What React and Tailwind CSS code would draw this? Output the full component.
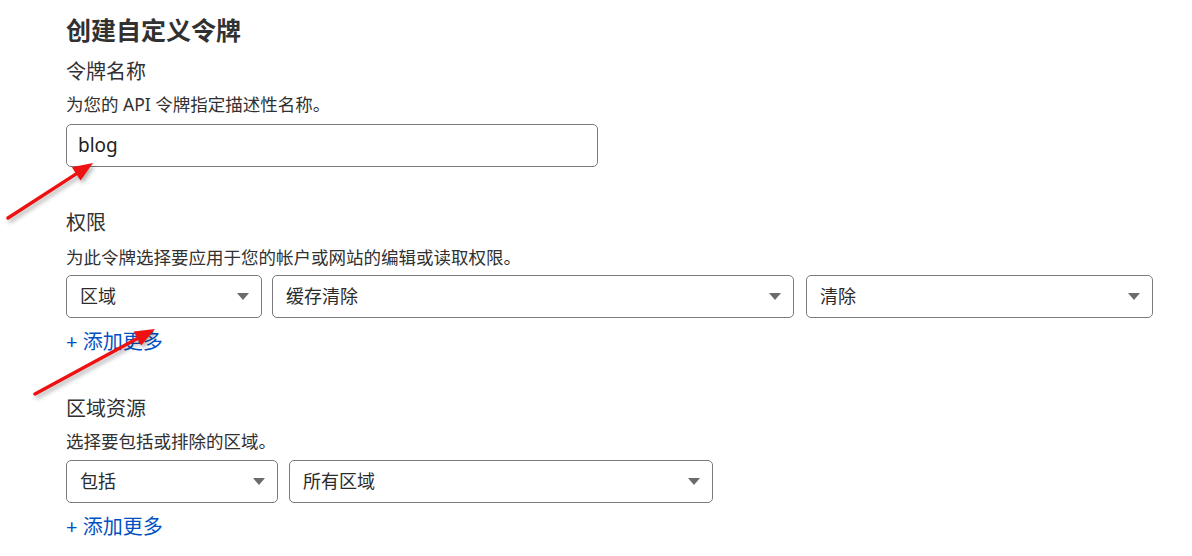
import React from 'react';

const font = { fontFamily: '"Noto Sans", "Noto Sans CJK SC", sans-serif' };

const Caret = () => (
    <svg width="12" height="7" viewBox="0 0 12 7" className="shrink-0">
        <path d="M0 0 L12 0 L6 7 Z" fill="#6b6b6b" />
    </svg>
);

const Select = ({ value, width }) => (
    <div
        className={`${width} h-[43px] flex items-center justify-between pl-[13px] pr-[12px] border border-[#7b7b7b] rounded-[5px] bg-white text-[18px] text-[#2b2b2b]`}
    >
        <span>{value}</span>
        <Caret />
    </div>
);

const AddMore = () => (
    <a className="mt-[12px] h-[24px] leading-[24px] text-[20px] text-[#0051c3] cursor-pointer">
        + 添加更多
    </a>
);

const Arrow = ({ x1, y1, x2, y2 }) => {
    const ang = Math.atan2(y2 - y1, x2 - x1);
    const len = 20;
    const w = 8;
    const bx = x2 - len * Math.cos(ang);
    const by = y2 - len * Math.sin(ang);
    const px = -Math.sin(ang) * w;
    const py = Math.cos(ang) * w;
    return (
        <g>
            <line x1={x1} y1={y1} x2={bx} y2={by} stroke="#ee1111" strokeWidth="3.4" strokeLinecap="round" />
            <polygon points={`${x2},${y2} ${bx + px},${by + py} ${bx - px},${by - py}`} fill="#ee1111" />
        </g>
    );
};

export default function App() {
    return (
        <div className="relative w-[1192px] h-[556px] bg-white overflow-hidden" style={font}>
            <div className="flex flex-col items-start pl-[66px] pt-[14px]">
                <h1 className="h-[32px] leading-[32px] text-[25px] font-bold text-[#313131]">创建自定义令牌</h1>

                <div className="mt-[12px] h-[28px] leading-[28px] text-[20px] text-[#313131]">令牌名称</div>
                <div className="mt-[6px] h-[24px] leading-[24px] text-[17.5px] text-[#313131]">为您的 API 令牌指定描述性名称。</div>
                <div className="mt-[8px] w-[532px] h-[43px] flex items-center px-[11px] border border-[#7b7b7b] rounded-[5px] text-[19px] text-[#222]">
                    blog
                </div>

                <div className="mt-[42px] h-[28px] leading-[28px] text-[20px] text-[#313131]">权限</div>
                <div className="mt-[8px] h-[24px] leading-[24px] text-[17.5px] text-[#313131]">为此令牌选择要应用于您的帐户或网站的编辑或读取权限。</div>
                <div className="mt-[6px] flex">
                    <Select value="区域" width="w-[196px]" />
                    <div className="ml-[10px]">
                        <Select value="缓存清除" width="w-[522px]" />
                    </div>
                    <div className="ml-[12px]">
                        <Select value="清除" width="w-[347px]" />
                    </div>
                </div>
                <AddMore />

                <div className="mt-[41px] h-[28px] leading-[28px] text-[20px] text-[#313131]">区域资源</div>
                <div className="mt-[6px] h-[24px] leading-[24px] text-[17.5px] text-[#313131]">选择要包括或排除的区域。</div>
                <div className="mt-[7px] flex gap-[11px]">
                    <Select value="包括" width="w-[212px]" />
                    <Select value="所有区域" width="w-[424px]" />
                </div>
                <AddMore />
            </div>

            <svg
                className="absolute inset-0 pointer-events-none drop-shadow-[2px_3px_2px_rgba(0,0,0,0.3)]"
                width="1192"
                height="556"
            >
                <Arrow x1={8} y1={218} x2={93} y2={163} />
                <Arrow x1={35} y1={394} x2={155} y2={329} />
            </svg>
        </div>
    );
}
